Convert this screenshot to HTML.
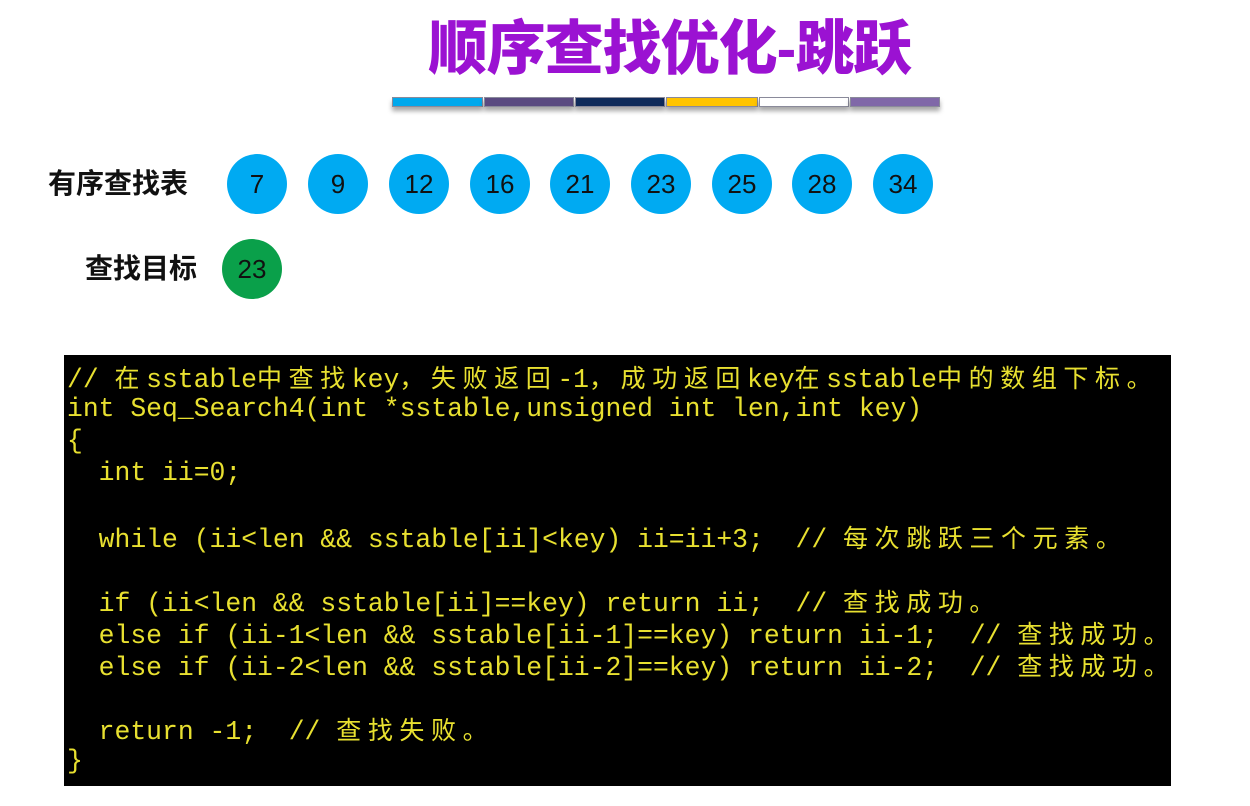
<!DOCTYPE html>
<html><head><meta charset="utf-8"><style>
body{margin:0;width:1250px;height:806px;background:#fff;position:relative;overflow:hidden;font-family:"Liberation Sans","Noto Sans CJK SC",sans-serif}
.t{position:absolute;left:360px;width:620px;text-align:center;top:11px;font-size:59px;font-weight:900;color:#9b12d2;line-height:76px;letter-spacing:-1px}
.bar{position:absolute;top:97px;height:10px;box-shadow:0 4px 5px rgba(0,0,0,.35);border:1px solid #8a8a9a;box-sizing:border-box}
.c{position:absolute;width:60px;height:60px;border-radius:50%;background:#00aaf2;color:#111;font-size:26px;text-align:center;line-height:60px}
.l{position:absolute;font-size:28px;font-weight:bold;color:#111;line-height:36px}
.code{position:absolute;left:64px;top:355px;width:1107px;height:431px;background:#000;color:#e8e030;font-family:"Liberation Mono","Noto Sans CJK SC",monospace;font-size:26.4px;white-space:pre}
.ln{position:absolute;left:3px;height:32px;line-height:32px}
.z{font-family:"Noto Sans CJK SC",sans-serif;font-size:25px;letter-spacing:6.6px;line-height:32px}
</style></head><body>
<div class="t">顺序查找优化-跳跃</div>
<div class="bar" style="left:392px;width:91px;background:#00a8ec"></div>
<div class="bar" style="left:484px;width:90px;background:#5a4a80"></div>
<div class="bar" style="left:575px;width:90px;background:#0e2a5a"></div>
<div class="bar" style="left:666px;width:92px;background:#ffc400"></div>
<div class="bar" style="left:759px;width:90px;background:#fff"></div>
<div class="bar" style="left:850px;width:90px;background:#8068a8"></div>
<div class="l" style="left:48px;top:166px">有序查找表</div>
<div class="l" style="left:85px;top:251px">查找目标</div>
<div class="c" style="left:227px;top:154px">7</div>
<div class="c" style="left:308px;top:154px">9</div>
<div class="c" style="left:389px;top:154px">12</div>
<div class="c" style="left:470px;top:154px">16</div>
<div class="c" style="left:550px;top:154px">21</div>
<div class="c" style="left:631px;top:154px">23</div>
<div class="c" style="left:712px;top:154px">25</div>
<div class="c" style="left:792px;top:154px">28</div>
<div class="c" style="left:873px;top:154px">34</div>
<div class="c" style="left:222px;top:239px;background:#0aa04a">23</div>
<div class="code">
<div class="ln" style="top:6px">// <span class="z">在</span>sstable<span class="z">中查找</span>key<span class="z">，失败返回</span>-1<span class="z">，成功返回</span>key<span class="z">在</span>sstable<span class="z">中的数组下标。</span></div>
<div class="ln" style="top:38px">int Seq_Search4(int *sstable,unsigned int len,int key)</div>
<div class="ln" style="top:70px">{</div>
<div class="ln" style="top:102px">  int ii=0;</div>
<div class="ln" style="top:166px">  while (ii&lt;len &amp;&amp; sstable[ii]&lt;key) ii=ii+3;  // <span class="z">每次跳跃三个元素。</span></div>
<div class="ln" style="top:230px">  if (ii&lt;len &amp;&amp; sstable[ii]==key) return ii;  // <span class="z">查找成功。</span></div>
<div class="ln" style="top:262px">  else if (ii-1&lt;len &amp;&amp; sstable[ii-1]==key) return ii-1;  // <span class="z">查找成功。</span></div>
<div class="ln" style="top:294px">  else if (ii-2&lt;len &amp;&amp; sstable[ii-2]==key) return ii-2;  // <span class="z">查找成功。</span></div>
<div class="ln" style="top:358px">  return -1;  // <span class="z">查找失败。</span></div>
<div class="ln" style="top:390px">}</div>
</div>
</body></html>
